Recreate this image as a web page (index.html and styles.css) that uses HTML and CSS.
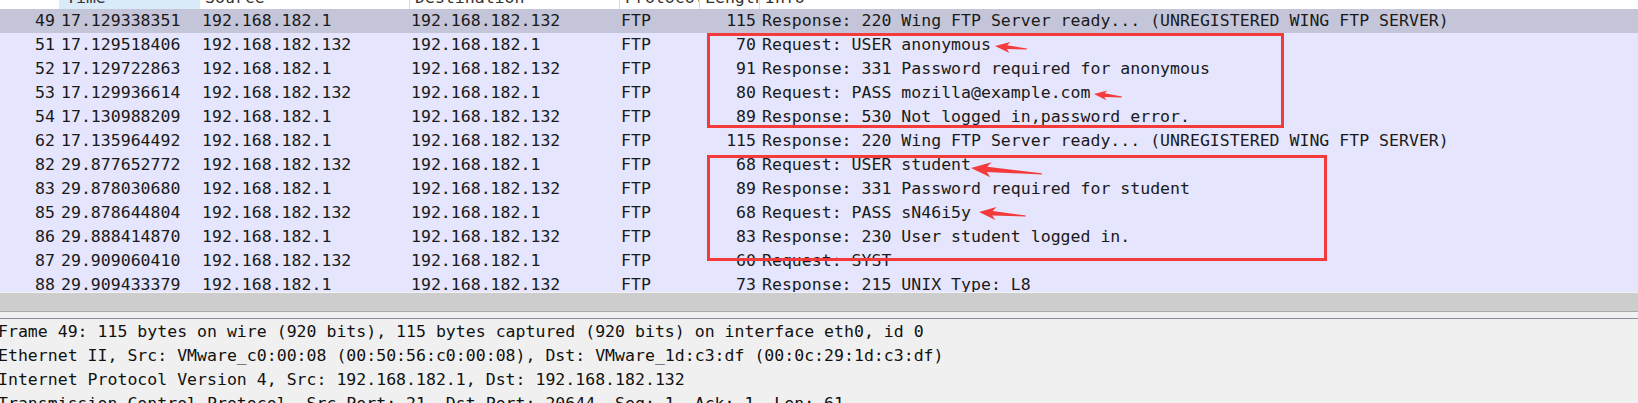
FILE: index.html
```html
<!DOCTYPE html>
<html>
<head>
<meta charset="utf-8">
<title>FTP capture</title>
<link rel="stylesheet" href="styles.css">
</head>
<body>
<div class="page">
  <div class="packet-list">
    <div class="row header">
      <div class="cell num"></div>
      <div class="cell sorted">Time</div>
      <div class="cell">Source</div>
      <div class="cell sep">Destination</div>
      <div class="cell sep">Protocol</div>
      <div class="cell sep">Length</div>
      <div class="cell sep">Info</div>
    </div>
    <div class="rows">
      <div class="row selected"><div class="cell num">49</div><div class="cell">17.129338351</div><div class="cell">192.168.182.1</div><div class="cell">192.168.182.132</div><div class="cell">FTP</div><div class="cell len">115</div><div class="cell info">Response: 220 Wing FTP Server ready... (UNREGISTERED WING FTP SERVER)</div></div>
      <div class="row"><div class="cell num">51</div><div class="cell">17.129518406</div><div class="cell">192.168.182.132</div><div class="cell">192.168.182.1</div><div class="cell">FTP</div><div class="cell len">70</div><div class="cell info">Request: USER anonymous</div></div>
      <div class="row"><div class="cell num">52</div><div class="cell">17.129722863</div><div class="cell">192.168.182.1</div><div class="cell">192.168.182.132</div><div class="cell">FTP</div><div class="cell len">91</div><div class="cell info">Response: 331 Password required for anonymous</div></div>
      <div class="row"><div class="cell num">53</div><div class="cell">17.129936614</div><div class="cell">192.168.182.132</div><div class="cell">192.168.182.1</div><div class="cell">FTP</div><div class="cell len">80</div><div class="cell info">Request: PASS mozilla@example.com</div></div>
      <div class="row"><div class="cell num">54</div><div class="cell">17.130988209</div><div class="cell">192.168.182.1</div><div class="cell">192.168.182.132</div><div class="cell">FTP</div><div class="cell len">89</div><div class="cell info">Response: 530 Not logged in,password error.</div></div>
      <div class="row"><div class="cell num">62</div><div class="cell">17.135964492</div><div class="cell">192.168.182.1</div><div class="cell">192.168.182.132</div><div class="cell">FTP</div><div class="cell len">115</div><div class="cell info">Response: 220 Wing FTP Server ready... (UNREGISTERED WING FTP SERVER)</div></div>
      <div class="row"><div class="cell num">82</div><div class="cell">29.877652772</div><div class="cell">192.168.182.132</div><div class="cell">192.168.182.1</div><div class="cell">FTP</div><div class="cell len">68</div><div class="cell info">Request: USER student</div></div>
      <div class="row"><div class="cell num">83</div><div class="cell">29.878030680</div><div class="cell">192.168.182.1</div><div class="cell">192.168.182.132</div><div class="cell">FTP</div><div class="cell len">89</div><div class="cell info">Response: 331 Password required for student</div></div>
      <div class="row"><div class="cell num">85</div><div class="cell">29.878644804</div><div class="cell">192.168.182.132</div><div class="cell">192.168.182.1</div><div class="cell">FTP</div><div class="cell len">68</div><div class="cell info">Request: PASS sN46i5y</div></div>
      <div class="row"><div class="cell num">86</div><div class="cell">29.888414870</div><div class="cell">192.168.182.1</div><div class="cell">192.168.182.132</div><div class="cell">FTP</div><div class="cell len">83</div><div class="cell info">Response: 230 User student logged in.</div></div>
      <div class="row"><div class="cell num">87</div><div class="cell">29.909060410</div><div class="cell">192.168.182.132</div><div class="cell">192.168.182.1</div><div class="cell">FTP</div><div class="cell len">60</div><div class="cell info">Request: SYST</div></div>
      <div class="row"><div class="cell num">88</div><div class="cell">29.909433379</div><div class="cell">192.168.182.1</div><div class="cell">192.168.182.132</div><div class="cell">FTP</div><div class="cell len">73</div><div class="cell info">Response: 215 UNIX Type: L8</div></div>
    </div>
  </div>

  <div class="splitter">
    <div class="hscroll"></div>
    <div class="handle"></div>
  </div>

  <div class="details">
    <div class="detail-line">Frame 49: 115 bytes on wire (920 bits), 115 bytes captured (920 bits) on interface eth0, id 0</div>
    <div class="detail-line">Ethernet II, Src: VMware_c0:00:08 (00:50:56:c0:00:08), Dst: VMware_1d:c3:df (00:0c:29:1d:c3:df)</div>
    <div class="detail-line">Internet Protocol Version 4, Src: 192.168.182.1, Dst: 192.168.182.132</div>
    <div class="detail-line">Transmission Control Protocol, Src Port: 21, Dst Port: 20644, Seq: 1, Ack: 1, Len: 61</div>
  </div>

  <div class="mark mark-anon"></div>
  <div class="mark mark-student"></div>

  <svg class="arrows" width="1638" height="403" viewBox="0 0 1638 403">
    <polygon transform="translate(995 46) rotate(5.4)" points="0,0 15,-5.5 12,-2 32,-0.5 32,0.5 12,2 15,5.5"/>
    <polygon transform="translate(1094 94) rotate(6)" points="0,0 13,-5 10.5,-1.8 28,-0.5 28,0.5 10.5,1.8 13,5"/>
    <polygon transform="translate(971 168) rotate(4.8)" points="0,0 20,-7.5 16,-2.6 71,-0.6 71,0.6 16,2.6 20,7.5"/>
    <polygon transform="translate(979 212) rotate(5)" points="0,0 17,-6.5 13.5,-2.3 47,-0.5 47,0.5 13.5,2.3 17,6.5"/>
  </svg>
</div>
</body>
</html>
```

FILE: styles.css
```css
* {
  box-sizing: border-box;
}

html, body {
  margin: 0;
  padding: 0;
  background: #f0f0f0;
}

.page {
  position: relative;
  width: 1638px;
  height: 403px;
  overflow: hidden;
  display: flex;
  flex-direction: column;
  font-family: "DejaVu Sans Mono", "Liberation Mono", monospace;
  font-size: 16.55px;
  color: #1a1a1a;
}

.packet-list {
  display: flex;
  flex-direction: column;
  flex: none;
}

.row {
  display: grid;
  grid-template-columns: 59px 141px 209px 210px 80px 60px 1fr;
  height: 24px;
  line-height: 24px;
  white-space: nowrap;
}

.cell {
  padding: 0 2px;
  overflow: hidden;
}

.cell.num {
  text-align: right;
  padding-right: 4px;
}

.cell.len {
  text-align: right;
  padding-right: 3px;
}

.cell.info {
  overflow: visible;
  padding-left: 3px;
}

.header {
  height: 22px;
  line-height: 22px;
  margin-top: -13px;
  background: #ffffff;
  color: #333333;
}

.header .cell {
  padding-left: 5px;
}

.header .cell.sorted {
  background: #d9eaf8;
  padding-left: 7px;
}

.header .cell.sep {
  border-left: 1px solid #dadada;
}

.rows {
  height: 283px;
  overflow: hidden;
  background: #e5e5fd;
}

.rows .row {
  background: #e5e5fd;
}

.rows .row.selected {
  background: #c5c5d9;
}

.splitter {
  flex: none;
  border-top: 1px solid #f2f2f2;
}

.hscroll {
  height: 19px;
  background: #cdcdcd;
  border-bottom: 1px solid #a9a9a9;
}

.handle {
  height: 7px;
  background: #f0f0f0;
  border-bottom: 1px solid #8b8b99;
}

.details {
  flex: 1;
  padding-top: 1px;
  background: #f0f0f0;
  color: #111111;
}

.detail-line {
  height: 24px;
  line-height: 24px;
  white-space: nowrap;
  margin-left: -2px;
}

.mark {
  position: absolute;
  border: 3px solid #f43a3a;
}

.mark-anon {
  left: 707px;
  top: 33px;
  width: 577px;
  height: 95px;
}

.mark-student {
  left: 707px;
  top: 155px;
  width: 620px;
  height: 106px;
}

.arrows {
  position: absolute;
  left: 0;
  top: 0;
  pointer-events: none;
}

.arrows polygon {
  fill: #f43a3a;
}
```
